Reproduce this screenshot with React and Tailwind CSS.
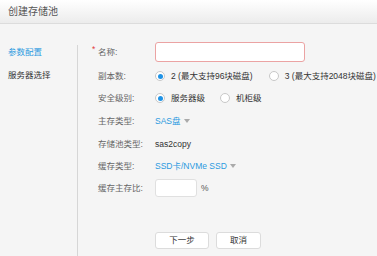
import React, { useState } from 'react';

const FONT = { fontFamily: '"Liberation Sans", "Noto Sans CJK SC", sans-serif' };

const Radio = ({ checked, label, onClick }) => (
  <div className="flex items-center shrink-0 cursor-pointer" onClick={onClick}>
    <span className="w-[10px] h-[10px] rounded-full border border-[#c8c8c8] bg-white flex items-center justify-center">
      {checked && <span className="w-[5px] h-[5px] rounded-full bg-[#1f93e6]" />}
    </span>
    <span className="ml-[6px] text-[#333]">{label}</span>
  </div>
);

const Caret = () => (
  <span className="ml-[3px] inline-block w-0 h-0 border-l-[3px] border-r-[3px] border-t-[4px] border-l-transparent border-r-transparent border-t-[#aaa]" />
);

const Row = ({ label, required, className, children }) => (
  <div className={`flex items-center whitespace-nowrap ${className}`}>
    <div className="w-[57px] shrink-0 flex items-center text-[#666] relative">
      {required && <span className="absolute left-[-6px] top-[-3px] text-[#e23b3b]">*</span>}
      <span>{label}</span>
    </div>
    <div className="flex items-center">{children}</div>
  </div>
);

export default function App() {
  const [copies, setCopies] = useState(2);
  const [level, setLevel] = useState('server');

  return (
    <div className="w-[377px] h-[256px] bg-[#f5f5f5] overflow-hidden text-[8.5px]" style={FONT}>
      {/* Header */}
      <div className="h-[24px] bg-gradient-to-b from-white to-[#ececec] border-b border-[#dcdcdc] flex items-center px-[8px]">
        <span className="text-[10px] text-[#555]">创建存储池</span>
      </div>

      <div className="flex h-[232px]">
        {/* Left nav */}
        <div className="w-[78px] shrink-0 mt-[21px] pl-[8px] border-r border-[#d6d6d6] whitespace-nowrap">
          <div className="h-[14px] flex items-center text-[#2c9ae0]">参数配置</div>
          <div className="h-[14px] mt-[9px] flex items-center text-[#333]">服务器选择</div>
        </div>

        {/* Form */}
        <div className="pl-[20px] pt-[18px] flex flex-col">
          <Row label="名称:" required className="h-[20px]">
            <input className="w-[150px] h-[20px] bg-white border border-[#eba3a3] rounded-[3px] outline-none px-[4px]" />
          </Row>
          <Row label="副本数:" className="h-[22px] mt-[3px]">
            <Radio checked={copies === 2} label="2 (最大支持96块磁盘)" onClick={() => setCopies(2)} />
            <div className="ml-[16px]">
              <Radio checked={copies === 3} label="3 (最大支持2048块磁盘)" onClick={() => setCopies(3)} />
            </div>
          </Row>
          <Row label="安全级别:" className="h-[22px]">
            <Radio checked={level === 'server'} label="服务器级" onClick={() => setLevel('server')} />
            <div className="ml-[15px]">
              <Radio checked={level === 'rack'} label="机柜级" onClick={() => setLevel('rack')} />
            </div>
          </Row>
          <Row label="主存类型:" className="h-[22px] mt-[1px]">
            <span className="text-[#2c9ae0]">SAS盘</span>
            <Caret />
          </Row>
          <Row label="存储池类型:" className="h-[22px] mt-[1px]">
            <span className="text-[#333]">sas2copy</span>
          </Row>
          <Row label="缓存类型:" className="h-[22px]">
            <span className="text-[#2c9ae0]">SSD卡/NVMe SSD</span>
            <Caret />
          </Row>
          <Row label="缓存主存比:" className="h-[22px]">
            <input className="w-[42px] h-[18px] bg-white border border-[#e0e0e0] rounded-[3px] outline-none px-[3px]" />
            <span className="ml-[4px] text-[#555]">%</span>
          </Row>

          <div className="flex mt-[33px] ml-[57px]">
            <button className="w-[54px] h-[17px] bg-white border border-[#dcdcdc] rounded-[3px] text-[#333] text-[8.5px]">下一步</button>
            <button className="ml-[7px] w-[45px] h-[17px] bg-white border border-[#dcdcdc] rounded-[3px] text-[#333] text-[8.5px]">取消</button>
          </div>
        </div>
      </div>
    </div>
  );
}
